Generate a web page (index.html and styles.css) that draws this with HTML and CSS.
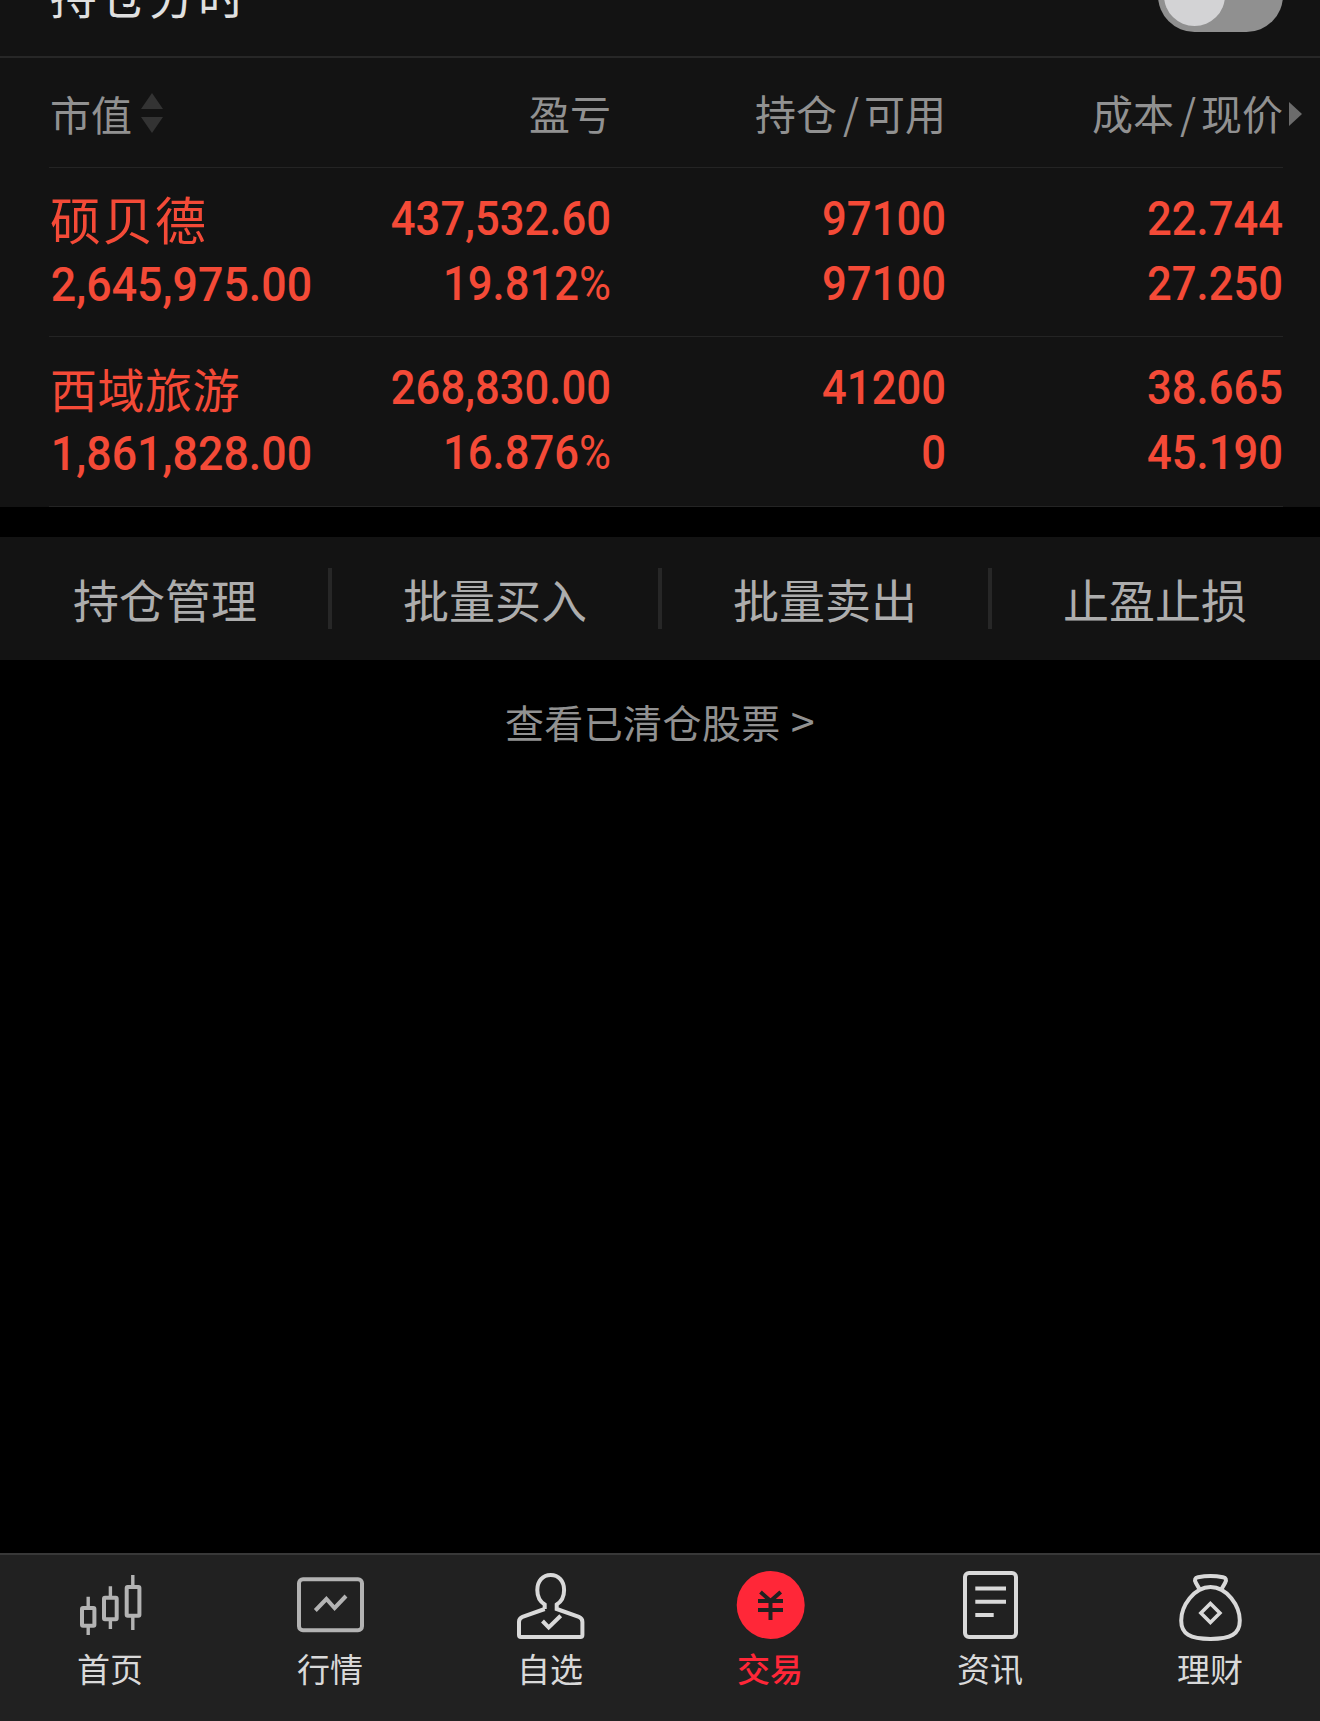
FILE: index.html
```
<!DOCTYPE html>
<html lang="zh-CN">
<head>
    <meta charset="UTF-8">
    <meta name="viewport" content="width=device-width, initial-scale=1.0">
    <title>持仓</title>
    <link rel="stylesheet" href="styles.css">
</head>
<body>
    <div class="topbar">
        <span class="topbar-title">持仓分时</span>
        <span class="switch"><span class="knob"></span></span>
    </div>

    <div class="holdings">
        <div class="row head">
            <div class="sortable">市值
                <svg class="sort" width="22" height="40" viewBox="0 0 22 40"><path d="M11 0L22 16H0zM0 24H22L11 40z"/></svg>
            </div>
            <div>盈亏</div>
            <div>持仓<i>/</i>可用</div>
            <div>成本<i>/</i>现价</div>
            <svg class="more" width="13" height="24" viewBox="0 0 13 24"><path d="M0 0L13 12L0 24z"/></svg>
        </div>
        <div class="row stock">
            <div><p class="name wide">硕贝德</p><p class="num">2,645,975.00</p></div>
            <div><p class="num">437,532.60</p><p class="num">19.812<b>%</b></p></div>
            <div><p class="num">97100</p><p class="num">97100</p></div>
            <div><p class="num">22.744</p><p class="num">27.250</p></div>
        </div>
        <div class="row stock">
            <div><p class="name">西域旅游</p><p class="num">1,861,828.00</p></div>
            <div><p class="num">268,830.00</p><p class="num">16.876<b>%</b></p></div>
            <div><p class="num">41200</p><p class="num">0</p></div>
            <div><p class="num">38.665</p><p class="num">45.190</p></div>
        </div>
    </div>

    <div class="actions">
        <div>持仓管理</div>
        <div>批量买入</div>
        <div>批量卖出</div>
        <div>止盈止损</div>
    </div>

    <div class="cleared">查看已清仓股票 <span>&gt;</span></div>

    <div class="tabbar">
        <div class="tab dim">
            <svg viewBox="0 0 72 72">
                <path d="M14.2 26.7V37M14.2 57V65M36.4 16.3V27M36.4 50V59M58.8 5V17M58.8 47V60" stroke-width="3.4"/>
                <rect x="8" y="38" width="12.4" height="17.7" rx="1"/>
                <rect x="30" y="27.7" width="12.7" height="21.6" rx="1"/>
                <rect x="52.7" y="17" width="12.7" height="28.7" rx="1"/>
            </svg>
            <span>首页</span>
        </div>
        <div class="tab dim">
            <svg viewBox="0 0 72 72">
                <rect x="5" y="9.3" width="63" height="51" rx="4"/>
                <path d="M21.3 40.5L32.4 29L40.6 38L52 26"/>
            </svg>
            <span>行情</span>
        </div>
        <div class="tab">
            <svg viewBox="0 0 72 72">
                <path d="M30.7 39V34.5C25.8 31.5 23.3 26.5 23.3 20C23.3 11 28.8 5 36.7 5S50.1 11 50.1 20C50.1 26.5 47.6 31.5 42.7 34.5V39L64.9 46.9C67.2 47.8 68.4 49.3 68.4 52V65Q68.4 67 66.4 67H7Q5 67 5 65V52C5 49.3 6.2 47.8 8.5 46.9L30.7 39"/>
                <path d="M28.5 51L34.7 57.5L46.7 45.8"/>
            </svg>
            <span>自选</span>
        </div>
        <div class="tab active">
            <svg viewBox="0 0 72 72">
                <circle cx="36.7" cy="35" r="34"/>
                <path d="M26.5 22L36.5 31L46.7 22M24 31H49M24 40H49M36.5 30V50"/>
            </svg>
            <span>交易</span>
        </div>
        <div class="tab">
            <svg viewBox="0 0 72 72">
                <rect x="11" y="3" width="51" height="64" rx="4"/>
                <path d="M21.3 18.4H52M21.3 31.7H52M21.3 45H39.7"/>
            </svg>
            <span>资讯</span>
        </div>
        <div class="tab">
            <svg viewBox="0 0 72 72">
                <path d="M36.5 17C20 17 7.2 36 7.2 50.5C7.2 64 16 68.9 36.5 68.9S65.8 64 65.8 50.5C65.8 36 53 17 36.5 17z"/>
                <path d="M26 20L21.7 12.5Q19.6 8 24 7.2Q36.5 4.8 49 7.2Q53.4 8 51.3 12.5L47 20"/>
                <path d="M36.4 33.5L45.9 43L36.4 52.5L26.9 43z" stroke-width="3.6"/>
            </svg>
            <span>理财</span>
        </div>
    </div>
</body>
</html>
```
FILE: styles.css
```
* {
    box-sizing: border-box;
}

body {
    margin: 0;
    height: 1721px;
    display: flex;
    flex-direction: column;
    overflow: hidden;
    background: #000;
    color: #919191;
    font-family: "Noto Sans CJK SC", sans-serif;
}

p {
    margin: 0;
}

/* top row, partly scrolled out of view */
.topbar {
    height: 58px;
    flex: none;
    display: flex;
    justify-content: space-between;
    align-items: flex-start;
    padding: 0 37px 0 50px;
    background: #131313;
    border-bottom: 2px solid #272727;
    overflow: hidden;
}

.topbar-title {
    margin-top: -38px;
    font-size: 47px;
    line-height: 64px;
    letter-spacing: 2.3px;
    color: #e0e0e0;
}

.switch {
    width: 125px;
    height: 73px;
    margin-top: -41px;
    padding: 6px;
    border-radius: 37px;
    background: #909090;
}

.knob {
    display: block;
    width: 61px;
    height: 61px;
    border-radius: 50%;
    background: #d3d3d5;
}

.holdings {
    background: #131313;
    padding: 0 37px 0 49px;
}

.row {
    position: relative;
    display: grid;
    grid-template-columns: 262px 300px 335px 337px;
    text-align: right;
    border-bottom: 1px solid #242424;
}

.row > div:first-child {
    text-align: left;
}

.head {
    height: 110px;
    line-height: 108px;
    font-size: 41px;
}

.head i {
    font-style: normal;
    margin: 0 5px 0 6px;
}

.sortable {
    display: flex;
    align-items: center;
    gap: 9px;
    padding-left: 1px;
}

.sort {
    fill: #333;
}

.more {
    position: absolute;
    right: -19px;
    top: 44px;
    fill: #6c6c6c;
}

.stock {
    height: 169px;
    padding-top: 18px;
    color: #f44a37;
}

.stock:last-child {
    height: 170px;
}

.stock p {
    height: 65px;
    line-height: 65px;
}

.name {
    font-size: 47px;
    letter-spacing: 0.5px;
    padding-left: 1px;
}

.name.wide {
    font-size: 51px;
    letter-spacing: 1.5px;
}

/* narrow figures */
.num {
    font-family: Roboto, sans-serif;
    font-size: 49px;
    font-weight: 500;
    white-space: nowrap;
    transform: scaleX(0.89);
    transform-origin: right;
}

.row > div:first-child .num {
    padding: 1px 0 0 2px;
    transform: scaleX(0.913);
    transform-origin: left;
}

.num b {
    font-weight: 400;
}

.actions {
    display: flex;
    height: 123px;
    flex: none;
    align-items: center;
    margin-top: 30px;
    background: #131313;
    color: #adadad;
}

.actions div {
    position: relative;
    flex: 1;
    height: 61px;
    line-height: 60px;
    font-size: 46px;
    text-align: center;
}

/* divider sits on the seam between two cells */
.actions div + div::before {
    content: "";
    position: absolute;
    left: -2px;
    top: 0;
    width: 4px;
    height: 61px;
    background: #272727;
}

.cleared {
    margin-top: 32px;
    text-align: center;
    font-size: 39px;
    line-height: 58px;
    letter-spacing: 0.4px;
}

.cleared span {
    font-size: 43px;
    line-height: 1;
    margin-left: 1px;
}

.tabbar {
    display: flex;
    height: 168px;
    flex: none;
    margin-top: auto;
    padding-top: 15px;
    background: #212121;
    border-top: 2px solid #383838;
}

.tab {
    flex: 1;
    display: flex;
    flex-direction: column;
    align-items: center;
    color: #d9d9d9;
}

.tab svg {
    width: 72px;
    height: 72px;
    fill: none;
    stroke: currentColor;
    stroke-width: 4;
}

.tab span {
    margin-top: 6px;
    font-size: 33px;
    line-height: 40px;
}

.tab.dim svg {
    color: #b3b3b3;
}

.tab.active {
    color: #ff2738;
}

.tab.active circle {
    fill: currentColor;
    stroke: none;
}

.tab.active path {
    stroke: #212121;
}

.tab.active span {
    font-weight: 500;
}
```
